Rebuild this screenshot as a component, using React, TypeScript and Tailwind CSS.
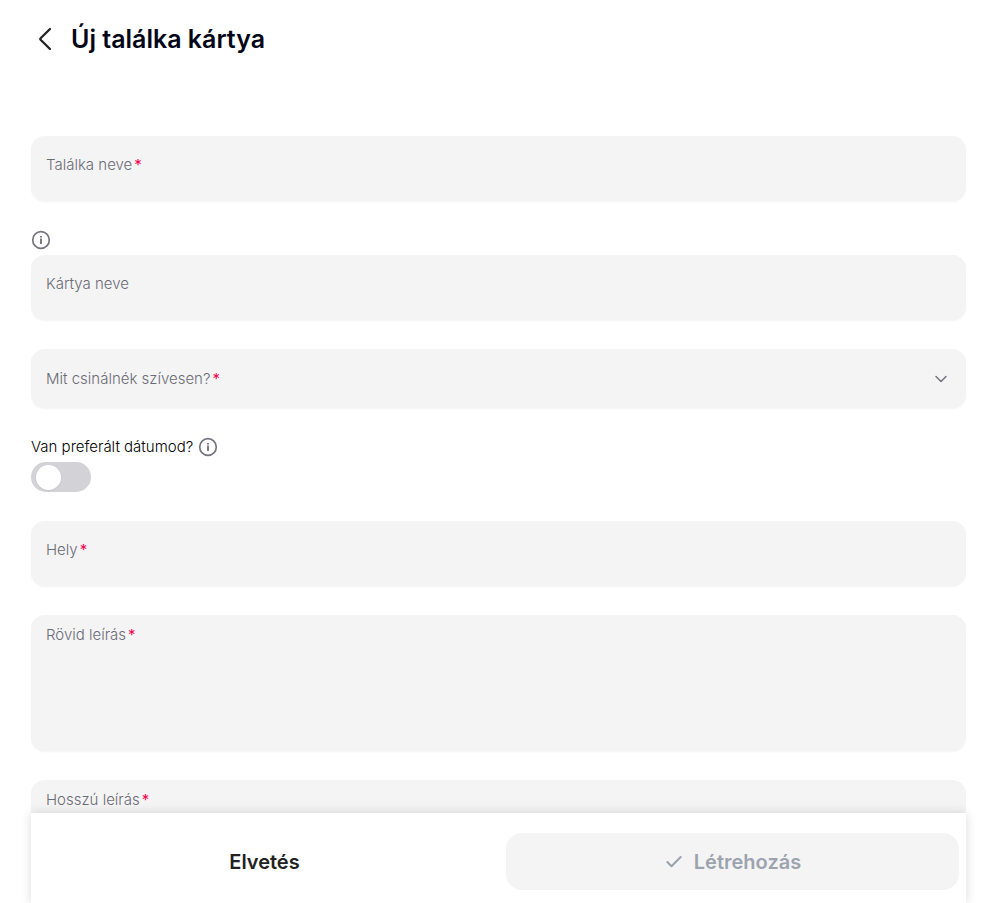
import { useState } from 'react';
import type { ReactNode } from 'react';
import { Check, ChevronDown } from 'lucide-react';

interface FieldProps {
  id: string;
  label: string;
  required?: boolean;
}

function InfoIcon() {
  return (
    <svg className="size-5 shrink-0" viewBox="0 0 20 20" fill="none" aria-hidden="true">
      <circle cx="10" cy="10" r="8.3" stroke="#74747e" strokeWidth="1.7" />
      <path d="M10 8.6v5.4" stroke="#74747e" strokeWidth="1.9" />
      <path d="M10 6v1.6" stroke="#74747e" strokeWidth="1.9" />
    </svg>
  );
}

function FieldLabel({ id, required, children }: { id: string; required?: boolean; children: ReactNode }) {
  return (
    <label htmlFor={id} className="block text-[15px] leading-5 font-light text-[#6b6b76]">
      {children}
      {required && <span className="ml-0.5 font-normal text-[#f5024f]">*</span>}
    </label>
  );
}

function TextField({ id, label, required }: FieldProps) {
  return (
    <div className="flex h-[65px] shrink-0 flex-col rounded-[14px] bg-[#f4f4f4] px-[15px] pt-[19px] shadow-xs">
      <FieldLabel id={id} required={required}>{label}</FieldLabel>
      <input id={id} type="text" required={required} className="h-5 w-full bg-transparent text-[15px] outline-none" />
    </div>
  );
}

function TextAreaField({ id, label, required }: FieldProps) {
  return (
    <div className="flex h-[136px] shrink-0 flex-col rounded-[14px] bg-[#f4f4f4] px-[15px] pt-[10px] shadow-xs">
      <FieldLabel id={id} required={required}>{label}</FieldLabel>
      <textarea id={id} required={required} className="w-full flex-1 resize-none bg-transparent text-[15px] outline-none" />
    </div>
  );
}

export default function App() {
  const [hasDate, setHasDate] = useState(false);

  return (
    <div className="flex h-screen flex-col overflow-hidden bg-white pr-[21px] pl-[31px] font-['Inter',sans-serif] text-black">
      <header className="flex h-[78px] shrink-0 items-center gap-[13px]">
        <button type="button" aria-label="Vissza" className="pl-[3px]">
          <svg className="h-6 w-6" viewBox="0 0 24 24" fill="none" stroke="#222" strokeWidth="2.3" strokeLinecap="round" strokeLinejoin="round">
            <path d="M16 2 6.6 11.2q-.8.8 0 1.6L16 22" />
          </svg>
        </button>
        <h1 className="text-[25px] leading-8 font-semibold text-[#020617]">Új találka kártya</h1>
      </header>

      <form id="card-form" className="flex min-h-0 flex-1 flex-col gap-[29px] overflow-y-auto pt-[58px] [scrollbar-width:none]">
        <TextField id="name" label="Találka neve" required />

        <div className="flex shrink-0 flex-col gap-[5px]">
          <InfoIcon />
          <TextField id="card-name" label="Kártya neve" />
        </div>

        <div className="relative flex h-[59px] shrink-0 items-center rounded-[14px] bg-[#f4f4f4] px-[15px] shadow-xs">
          <FieldLabel id="activity" required>Mit csinálnék szívesen?</FieldLabel>
          <select id="activity" required className="absolute inset-0 w-full appearance-none bg-transparent px-[15px] outline-none">
            <option value=""></option>
          </select>
          <ChevronDown className="ml-auto size-5 text-[#74747e]" strokeWidth={1.8} />
        </div>

        <div className="flex shrink-0 flex-col gap-[5px]">
          <div className="flex h-5 items-center gap-[5px]">
            <label htmlFor="has-date" className="text-[15px] leading-5 font-light">Van preferált dátumod?</label>
            <InfoIcon />
          </div>
          <input
            id="has-date"
            type="checkbox"
            role="switch"
            checked={hasDate}
            onChange={(e) => setHasDate(e.target.checked)}
            className="flex h-[30px] w-[60px] cursor-pointer appearance-none items-center rounded-full bg-[#d2d2d7] px-[5px] before:size-[25px] before:rounded-full before:bg-white before:shadow-xs before:transition checked:bg-[#f5024f] checked:before:translate-x-[25px]"
          />
        </div>

        <TextField id="place" label="Hely" required />
        <TextAreaField id="short" label="Rövid leírás" required />
        <TextAreaField id="long" label="Hosszú leírás" required />
      </form>

      <footer className="z-10 grid h-[90px] shrink-0 grid-cols-2 gap-[15px] bg-white px-[7px] pt-5 shadow-[0_0_10px_rgba(0,0,0,0.15)]">
        <button type="button" className="h-[57px] rounded-2xl text-[20px] leading-7 font-semibold text-[#222]">
          Elvetés
        </button>
        <button
          type="submit"
          form="card-form"
          disabled
          className="flex h-[57px] items-center justify-center gap-[10px] rounded-2xl bg-[#f4f4f4] text-[20px] leading-7 font-semibold text-[#9ca3af]"
        >
          <Check className="size-5" strokeWidth={2.5} />
          Létrehozás
        </button>
      </footer>
    </div>
  );
}
